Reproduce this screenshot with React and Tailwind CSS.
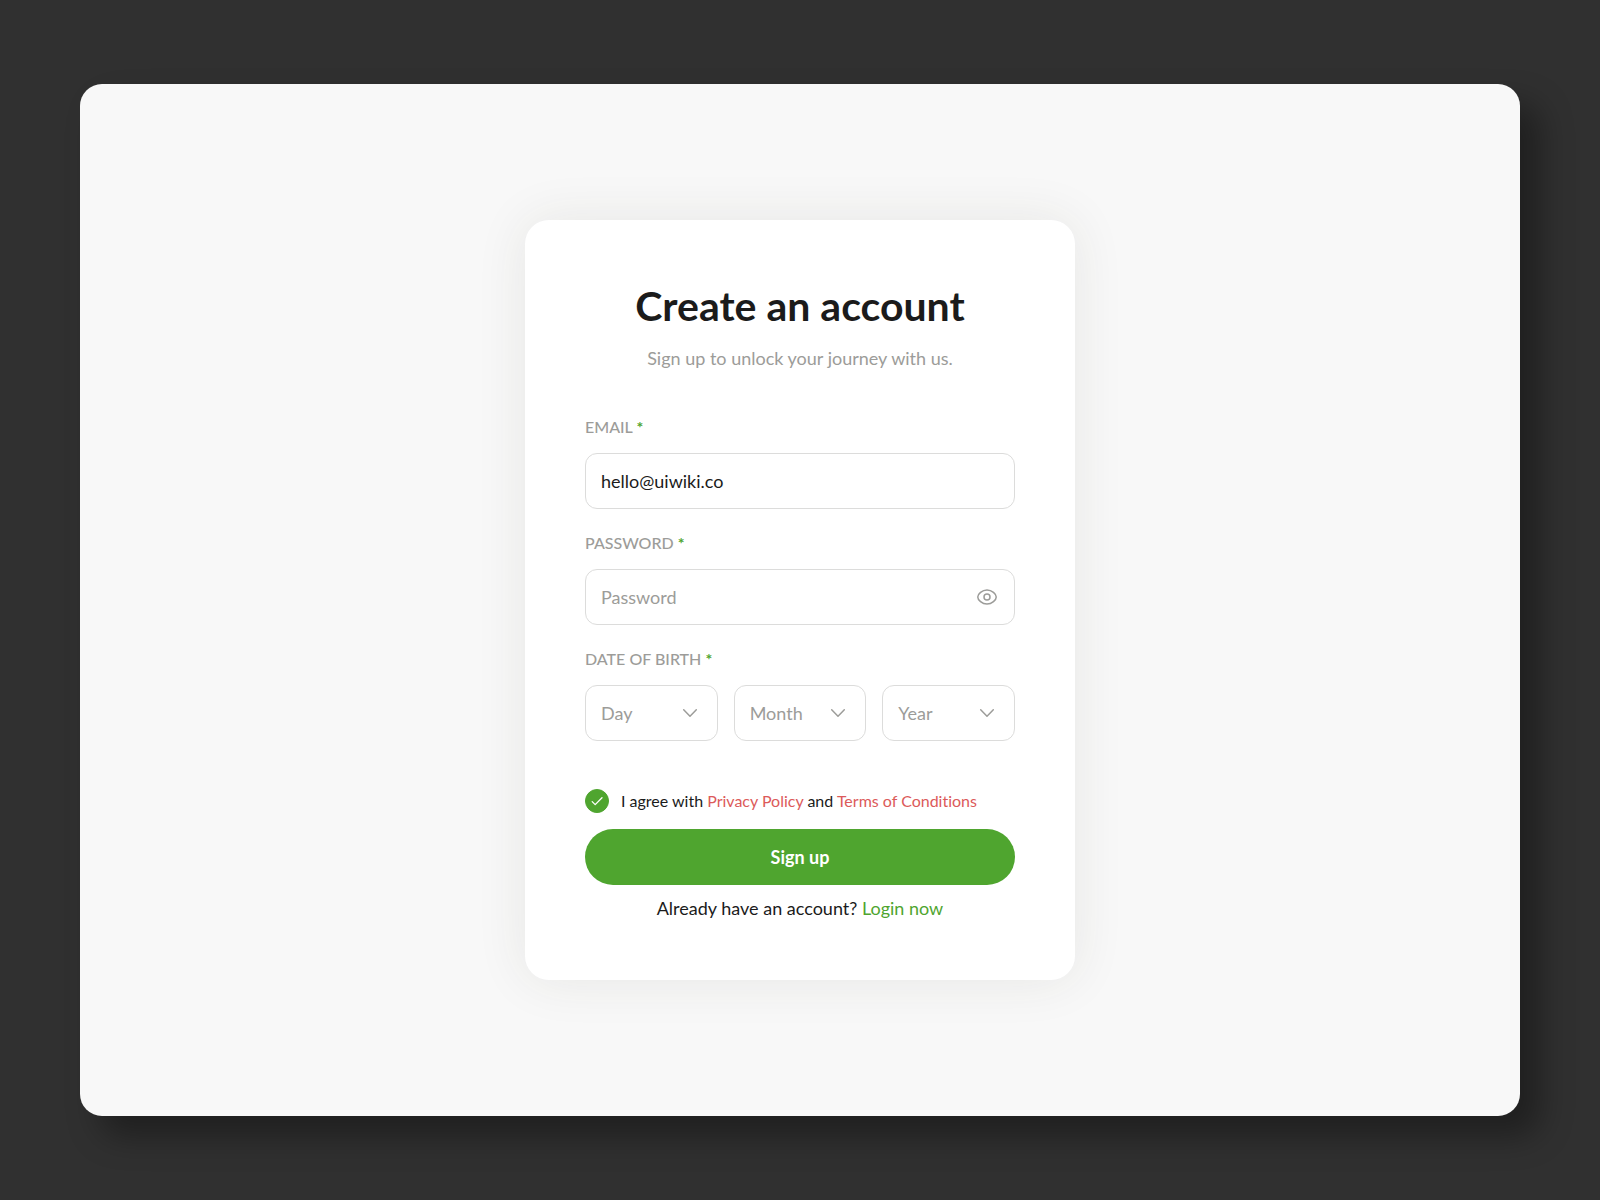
import React, { useState } from 'react'

const days = Array.from({ length: 31 }, (_, i) => i + 1)
const months = ['January', 'February', 'March', 'April', 'May', 'June', 'July', 'August', 'September', 'October', 'November', 'December']
const years = Array.from({ length: 80 }, (_, i) => 2024 - i)

const fieldClass =
  'h-14 w-full rounded-xl border border-[#dcdcdb] bg-white px-[15px] text-lg outline-none placeholder:text-[#9c9c99] focus:border-[#4fa52f]'

function EyeIcon() {
  return (
    <svg viewBox="0 0 24 24" className="h-6 w-6" fill="none" stroke="currentColor" strokeWidth="1.5">
      <path d="M2.75 12C2.75 8.9 7.1 5 12 5S21.25 8.9 21.25 12 16.9 19 12 19 2.75 15.1 2.75 12Z" />
      <circle cx="12" cy="12" r="3" />
    </svg>
  )
}

function Label({ htmlFor, children }) {
  return (
    <label htmlFor={htmlFor} className="text-base leading-5 font-medium text-[#9c9c99] uppercase">
      {children} <span className="font-bold text-[#4fa52f]">*</span>
    </label>
  )
}

// Dropdown with its own chevron
function DateSelect({ id, label, options }) {
  const [value, setValue] = useState('')

  return (
    <div className="relative flex-1">
      <select
        id={id}
        aria-label={label}
        value={value}
        onChange={(e) => setValue(e.target.value)}
        className={`${fieldClass} appearance-none text-[#9c9c99]`}
      >
        <option value="">{label}</option>
        {options.map((option) => (
          <option key={option} value={option}>{option}</option>
        ))}
      </select>
      <svg
        viewBox="0 0 24 24"
        className="pointer-events-none absolute top-4 right-4 h-6 w-6 text-[#9c9c99]"
        fill="none"
        stroke="currentColor"
        strokeWidth="1.5"
        strokeLinecap="round"
        strokeLinejoin="round"
      >
        <path d="m5.7 8.7 6.3 6.5 6.3-6.5" />
      </svg>
    </div>
  )
}

export default function App() {
  const [email, setEmail] = useState('hello@uiwiki.co')
  const [password, setPassword] = useState('')
  const [showPassword, setShowPassword] = useState(false)
  const [agreed, setAgreed] = useState(true)

  return (
    <div className="flex min-h-screen bg-[#303030] px-20 py-[84px] font-['Lato',sans-serif] text-[#1b1b1b] [font-variant-ligatures:none]">
      <main className="flex flex-1 items-center justify-center rounded-[22px] bg-[#f8f8f8] py-20 shadow-[20px_20px_32px_rgba(0,0,0,0.35)]">
        <form
          onSubmit={(e) => e.preventDefault()}
          className="flex w-full max-w-[550px] flex-col rounded-3xl bg-white p-[60px] shadow-[0_0_52px_rgba(60,60,30,0.09)]"
        >
          <h1 className="text-center text-[41px] leading-[52px] font-bold">Create an account</h1>
          <p className="mt-[14px] text-center text-lg leading-6 text-[#9c9c99]">Sign up to unlock your journey with us.</p>

          <div className="mt-[47px] flex flex-col gap-6">
            <div className="flex flex-col gap-4">
              <Label htmlFor="email">Email</Label>
              <input
                id="email"
                type="email"
                value={email}
                onChange={(e) => setEmail(e.target.value)}
                className={fieldClass}
              />
            </div>

            <div className="flex flex-col gap-4">
              <Label htmlFor="password">Password</Label>
              <div className="relative">
                <input
                  id="password"
                  type={showPassword ? 'text' : 'password'}
                  placeholder="Password"
                  value={password}
                  onChange={(e) => setPassword(e.target.value)}
                  className={fieldClass}
                />
                <button
                  type="button"
                  aria-label="Show password"
                  onClick={() => setShowPassword(!showPassword)}
                  className="absolute top-4 right-4 text-[#9c9c99]"
                >
                  <EyeIcon />
                </button>
              </div>
            </div>

            <div className="flex flex-col gap-4">
              <Label htmlFor="day">Date of birth</Label>
              <div className="flex gap-4">
                <DateSelect id="day" label="Day" options={days} />
                <DateSelect id="month" label="Month" options={months} />
                <DateSelect id="year" label="Year" options={years} />
              </div>
            </div>
          </div>

          <div className="mt-12 flex items-center gap-3">
            <div className="relative h-6 w-6">
              <input
                id="agree"
                type="checkbox"
                checked={agreed}
                onChange={(e) => setAgreed(e.target.checked)}
                className="peer block h-6 w-6 appearance-none rounded-full border border-[#dcdcdb] checked:border-[#4fa52f] checked:bg-[#4fa52f]"
              />
              <svg
                viewBox="0 0 24 24"
                className="pointer-events-none absolute inset-0 h-6 w-6 text-white opacity-0 peer-checked:opacity-100"
                fill="none"
                stroke="currentColor"
                strokeWidth="1.3"
                strokeLinecap="round"
                strokeLinejoin="round"
              >
                <path d="m7.2 12.6 3 3 6.8-6.9" />
              </svg>
            </div>
            <label htmlFor="agree" className="text-base leading-6">
              I agree with <a href="#privacy" className="text-[#dc5a5a]">Privacy Policy</a> and{' '}
              <a href="#terms" className="text-[#dc5a5a]">Terms of Conditions</a>
            </label>
          </div>

          <button type="submit" className="mt-4 h-14 rounded-full bg-[#4fa52f] text-lg font-bold text-white">
            Sign up
          </button>

          <p className="mt-[11px] text-center text-lg leading-6">
            Already have an account? <a href="#login" className="text-[#4fa52f]">Login now</a>
          </p>
        </form>
      </main>
    </div>
  )
}
